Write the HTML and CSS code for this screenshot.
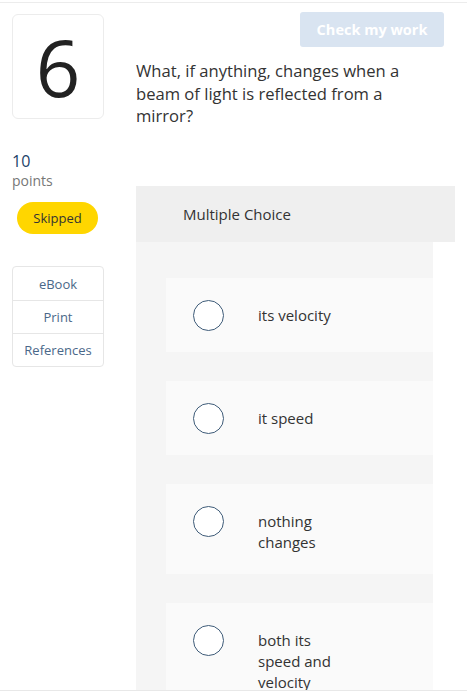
FILE: index.html
```html
<!DOCTYPE html>
<html>
<head>
<meta charset="utf-8">
<link rel="stylesheet" href="styles.css">
</head>
<body>
<div class="viewport">
  <div class="topline"></div>
  <div class="main">
    <aside class="left">
      <div class="qnum">6</div>
      <div class="pts-num">10</div>
      <div class="pts-label">points</div>
      <div class="pill">Skipped</div>
      <div class="links">
        <div class="link">eBook</div>
        <div class="link">Print</div>
        <div class="link">References</div>
      </div>
    </aside>
    <section class="right">
      <div class="btn-row"><button class="check">Check my work</button></div>
      <p class="question">What, if anything, changes when a beam of light is reflected from a mirror?</p>
      <div class="mc-head">Multiple Choice</div>
      <div class="panel">
        <div class="opt"><span class="radio"></span><span class="opt-text">its velocity</span></div>
        <div class="opt"><span class="radio"></span><span class="opt-text">it speed</span></div>
        <div class="opt"><span class="radio"></span><span class="opt-text">nothing changes</span></div>
        <div class="opt"><span class="radio"></span><span class="opt-text">both its speed and velocity</span></div>
      </div>
    </section>
  </div>
</div>
<div class="footer"></div>
</body>
</html>
```
FILE: styles.css
```css
* { box-sizing: border-box; }
html, body { margin: 0; padding: 0; background: #fff; }
body { font-family: "Open Sans", "Liberation Sans", sans-serif; color: #333; overflow: hidden; }
.viewport { height: 690px; overflow: hidden; }
.topline { height: 3px; border-bottom: 1px solid #ececec; }
.main { display: grid; grid-template-columns: 92px 1fr; column-gap: 32px; padding: 0 12px; }
.left { display: flex; flex-direction: column; align-items: flex-start; }
.qnum { margin-top: 11px; width: 92px; height: 105px; border: 1px solid #ececec; border-radius: 6px; display: flex; align-items: center; justify-content: center; font-size: 78px; font-weight: 400; color: #222; line-height: 1; }
.pts-num { margin-top: 32px; font-size: 16px; line-height: 20px; color: #1c3f69; }
.pts-label { font-size: 14px; line-height: 18px; color: #777; margin-top: 1px; }
.pill { margin-top: 12px; margin-left: 5px; width: 81px; height: 32px; border-radius: 16px; background: #ffd600; color: #333; font-size: 13px; display: flex; align-items: center; justify-content: center; }
.links { margin-top: 32px; width: 92px; border: 1px solid #e6e6e6; border-radius: 4px; }
.link { height: 33px; display: flex; align-items: center; justify-content: center; font-size: 13px; color: #4a6889; }
.link + .link { border-top: 1px solid #e6e6e6; }
.right { display: flex; flex-direction: column; }
.btn-row { display: flex; justify-content: flex-end; margin-top: 9px; padding-right: 11px; }
.check { width: 144px; height: 35px; border: none; border-radius: 3px; background: #d9e4f1; color: #fff; font-family: inherit; font-weight: 700; font-size: 14.5px; }
.question { margin: 13px 0 0; font-size: 16.6px; line-height: 22.5px; color: #333; padding-right: 30px; }
.mc-head { margin-top: 58px; height: 56px; background: #efefef; display: flex; align-items: center; padding-left: 47px; font-size: 15px; color: #333; }
.panel { margin-right: 22px; background: #f5f5f5; padding: 36px 0 40px 30px; display: flex; flex-direction: column; gap: 29px; }
.opt { background: #fafafa; display: flex; align-items: flex-start; padding: 22px 0 21px 27px; }
.radio { flex: none; width: 31px; height: 31px; border: 1.5px solid #3e5b78; border-radius: 50%; background: #fff; }
.opt-text { margin-left: 34px; margin-top: 5px; width: 90px; font-size: 15px; line-height: 21px; color: #333; }
.footer { height: 10px; border-top: 1px solid #e8e8e8; }
```
